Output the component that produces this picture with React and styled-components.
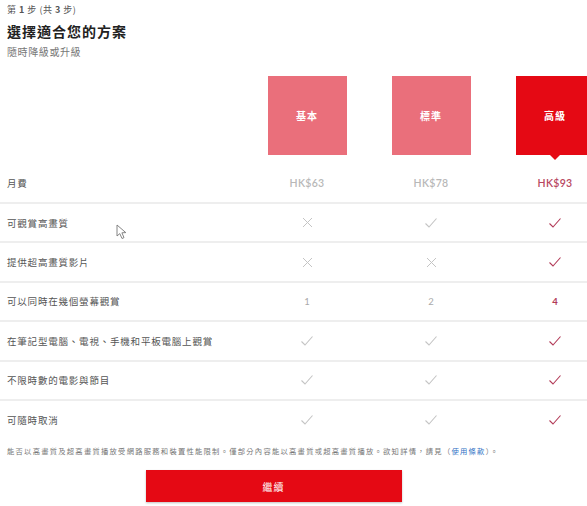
import React from 'react';
import styled, { createGlobalStyle } from 'styled-components';

const GlobalStyle = createGlobalStyle`
    html, body {
        margin: 0;
        padding: 0;
        background: #ffffff;
        overflow: hidden;
    }
    body {
        font-family: "Noto Sans CJK TC", "Noto Sans", sans-serif;
        color: #333;
    }
`;

const plans = [
    { name: '基本', price: 'HK$63' },
    { name: '標準', price: 'HK$78' },
    { name: '高級', price: 'HK$93', selected: true },
];

const features = [
    { label: '可觀賞高畫質', values: ['x', 'v', 'v'] },
    { label: '提供超高畫質影片', values: ['x', 'x', 'v'] },
    { label: '可以同時在幾個螢幕觀賞', values: ['1', '2', '4'] },
    { label: '在筆記型電腦、電視、手機和平板電腦上觀賞', values: ['v', 'v', 'v'] },
    { label: '不限時數的電影與節目', values: ['v', 'v', 'v'] },
    { label: '可隨時取消', values: ['v', 'v', 'v'] },
];

const Check = ({ active }) => (
    <svg width="14" height="12" viewBox="0 0 14 12" fill="none">
        <path d="M1.5 6.5 L5 10 L12.5 1.5" stroke={active ? '#b23a57' : '#c4c4c4'} strokeWidth="1.1" />
    </svg>
);

const Cross = () => (
    <svg width="11" height="11" viewBox="0 0 11 11" fill="none">
        <path d="M1 1 L10 10 M10 1 L1 10" stroke="#c4c4c4" strokeWidth="1" />
    </svg>
);

const Cursor = () => (
    <svg width="12" height="16" viewBox="0 0 12 16" fill="none">
        <path d="M1 1 L1 12 L3.8 9.6 L6 14.5 L8 13.6 L5.9 8.8 L9.8 8.6 Z" fill="#fff" stroke="#777" strokeWidth="0.9" strokeLinejoin="round" />
    </svg>
);

const renderValue = (v, active) => {
    if (v === 'v') return <Check active={active} />;
    if (v === 'x') return <Cross />;
    return <Count $active={active}>{v}</Count>;
};

const App = () => {
    return (
        <>
            <GlobalStyle />
            <Page>
                <Header>
                    <Step>第 <b>1</b> 步 (共 <b>3</b> 步)</Step>
                    <Title>選擇適合您的方案</Title>
                    <Subtitle>隨時降級或升級</Subtitle>
                </Header>
                <Table>
                    <PlanRow>
                        <span />
                        {plans.map(p => (
                            <PlanCell key={p.name}>
                                <PlanBox $selected={p.selected}>{p.name}</PlanBox>
                            </PlanCell>
                        ))}
                    </PlanRow>
                    <Row $first>
                        <Label>月費</Label>
                        {plans.map(p => (
                            <Cell key={p.name}>
                                <Price $active={p.selected}>{p.price}</Price>
                            </Cell>
                        ))}
                    </Row>
                    {features.map(({ label, values }) => (
                        <Row key={label}>
                            <Label>{label}</Label>
                            {values.map((v, i) => (
                                <Cell key={i}>{renderValue(v, i === 2)}</Cell>
                            ))}
                        </Row>
                    ))}
                </Table>
                <Note>
                    能否以高畫質及超高畫質播放受網路服務和裝置性能限制。僅部分內容能以高畫質或超高畫質播放。欲知詳情，請見（<a>使用條款</a>）。
                </Note>
                <Footer>
                    <Button>繼續</Button>
                </Footer>
                <Pointer>
                    <Cursor />
                </Pointer>
            </Page>
        </>
    );
};

export default App;

const Page = styled.div`
    position: relative;
    width: 617px;
    height: 506px;
`;

const Header = styled.div`
    padding: 4px 0 0 7px;
`;

const Step = styled.div`
    font-size: 9px;
    color: #555;
    letter-spacing: 0.5px;
    line-height: 12px;
    b {
        font-weight: 700;
    }
`;

const Title = styled.h1`
    margin: 6px 0 0;
    font-size: 14px;
    font-weight: 700;
    letter-spacing: 1px;
    line-height: 18px;
    color: #222;
`;

const Subtitle = styled.div`
    margin-top: 5px;
    font-size: 10px;
    letter-spacing: 0.6px;
    line-height: 13px;
    color: #777;
`;

const Table = styled.div`
    margin-top: 18px;
`;

const PlanRow = styled.div`
    display: grid;
    grid-template-columns: 245px 124px 124px 124px;
    height: 96px;
`;

const PlanCell = styled.div`
    display: flex;
    justify-content: center;
`;

const PlanBox = styled.div`
    position: relative;
    width: 79px;
    height: 79px;
    display: flex;
    align-items: center;
    justify-content: center;
    background: ${p => (p.$selected ? '#e50914' : '#ea6f7b')};
    color: #fff;
    font-size: 10px;
    font-weight: 700;
    letter-spacing: 1px;
    &::after {
        content: '';
        display: ${p => (p.$selected ? 'block' : 'none')};
        position: absolute;
        left: 50%;
        bottom: -5px;
        margin-left: -5px;
        border-left: 5px solid transparent;
        border-right: 5px solid transparent;
        border-top: 5px solid #e50914;
    }
`;

const Row = styled.div`
    display: grid;
    grid-template-columns: 245px 124px 124px 124px;
    align-items: center;
    height: ${p => (p.$first ? '22px' : '37.4px')};
    padding-bottom: ${p => (p.$first ? '8px' : '0')};
    border-bottom: 2px solid #eeeeee;
    &:last-child {
        border-bottom: none;
    }
`;

const Label = styled.div`
    padding-left: 7px;
    font-size: 9.5px;
    letter-spacing: 0.8px;
    color: #555;
    white-space: nowrap;
`;

const Cell = styled.div`
    display: flex;
    justify-content: center;
    align-items: center;
`;

const Price = styled.span`
    font-family: "Lato", "Noto Sans", sans-serif;
    font-size: 10.5px;
    font-weight: 600;
    letter-spacing: 0.3px;
    color: ${p => (p.$active ? '#b8475f' : '#b8b8b8')};
`;

const Count = styled.span`
    font-family: "Lato", "Noto Sans", sans-serif;
    font-size: 9.5px;
    font-weight: ${p => (p.$active ? 700 : 400)};
    color: ${p => (p.$active ? '#b23a57' : '#aaa')};
`;

const Note = styled.p`
    margin: 7px 0 0;
    padding-left: 7px;
    font-size: 7.3px;
    letter-spacing: 1.25px;
    line-height: 12px;
    color: #777;
    white-space: nowrap;
    a {
        color: #2f6fc4;
    }
`;

const Footer = styled.div`
    width: 587px;
    display: flex;
    justify-content: center;
    padding-top: 13px;
`;

const Button = styled.button`
    width: 256px;
    height: 32px;
    margin-left: -40px;
    border: none;
    background: #e50914;
    color: #fff;
    font-family: "Noto Sans CJK TC", sans-serif;
    font-size: 10px;
    letter-spacing: 1px;
    box-shadow: 0 1px 2px rgba(0, 0, 0, 0.25);
`;

const Pointer = styled.div`
    position: absolute;
    left: 116px;
    top: 221px;
`;
